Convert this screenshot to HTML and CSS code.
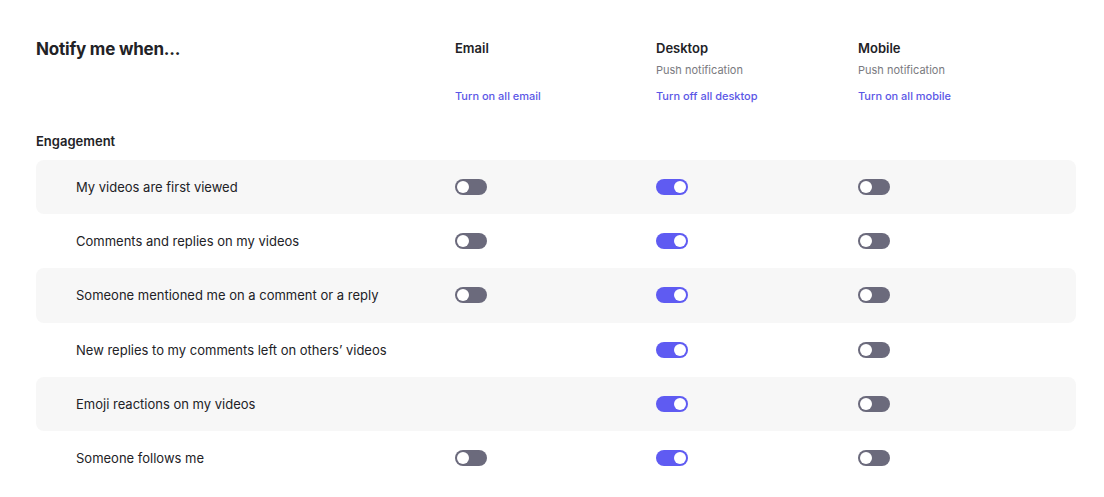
FILE: index.html
```html
<!DOCTYPE html>
<html lang="en">
<head>
    <meta charset="UTF-8">
    <meta name="viewport" content="width=device-width, initial-scale=1.0">
    <title>Notification settings</title>
    <link rel="stylesheet" href="styles.css">
</head>
<body>
    <div class="settings">
        <div class="settings-head">
            <h1>Notify me when...</h1>
            <div class="channel">
                <h3>Email</h3>
                <p class="sub">&nbsp;</p>
                <a href="#">Turn on all email</a>
            </div>
            <div class="channel">
                <h3>Desktop</h3>
                <p class="sub">Push notification</p>
                <a href="#">Turn off all desktop</a>
            </div>
            <div class="channel">
                <h3>Mobile</h3>
                <p class="sub">Push notification</p>
                <a href="#">Turn on all mobile</a>
            </div>
        </div>

        <h2>Engagement</h2>

        <div class="rows">
            <div class="row shaded">
                <span class="label">My videos are first viewed</span>
                <span><span class="toggle"></span></span>
                <span><span class="toggle on"></span></span>
                <span><span class="toggle"></span></span>
            </div>
            <div class="row">
                <span class="label">Comments and replies on my videos</span>
                <span><span class="toggle"></span></span>
                <span><span class="toggle on"></span></span>
                <span><span class="toggle"></span></span>
            </div>
            <div class="row shaded">
                <span class="label">Someone mentioned me on a comment or a reply</span>
                <span><span class="toggle"></span></span>
                <span><span class="toggle on"></span></span>
                <span><span class="toggle"></span></span>
            </div>
            <div class="row">
                <span class="label">New replies to my comments left on others’ videos</span>
                <span></span>
                <span><span class="toggle on"></span></span>
                <span><span class="toggle"></span></span>
            </div>
            <div class="row shaded">
                <span class="label">Emoji reactions on my videos</span>
                <span></span>
                <span><span class="toggle on"></span></span>
                <span><span class="toggle"></span></span>
            </div>
            <div class="row">
                <span class="label">Someone follows me</span>
                <span><span class="toggle"></span></span>
                <span><span class="toggle on"></span></span>
                <span><span class="toggle"></span></span>
            </div>
        </div>
    </div>
</body>
</html>
```

FILE: styles.css
```css
body {
    margin: 0;
    padding: 0;
    background-color: #fff;
    font-family: "Inter", "Lato", sans-serif;
    color: #222226;
}

.settings {
    padding: 38px 28px 0 36px;
}

.settings-head {
    display: grid;
    grid-template-columns: 419px 201px 202px 1fr;
}

.settings-head h1 {
    margin: 0;
    font-size: 17px;
    font-weight: 700;
    line-height: 22px;
    letter-spacing: -0.2px;
}

.channel h3 {
    margin: 0;
    font-size: 13px;
    font-weight: 600;
    line-height: 20px;
}

.channel .sub {
    margin: 4px 0 0;
    font-size: 11px;
    color: #7a7a80;
    line-height: 16px;
}

.channel a {
    display: block;
    margin-top: 10px;
    font-size: 11px;
    font-weight: 500;
    color: #5b57e6;
    text-decoration: none;
    line-height: 16px;
}

h2 {
    margin: 28px 0 10px;
    font-size: 13px;
    font-weight: 600;
    line-height: 18px;
}

.row {
    display: grid;
    grid-template-columns: 419px 201px 202px 1fr;
    align-items: center;
    height: 54.2px;
    border-radius: 8px;
}

.row.shaded {
    background-color: #f7f7f7;
}

.label {
    padding-left: 40px;
    font-size: 13px;
}

.toggle {
    display: block;
    position: relative;
    width: 32px;
    height: 16px;
    border-radius: 8px;
    background-color: #6b6a7c;
}

.toggle::after {
    content: "";
    position: absolute;
    top: 2px;
    left: 2px;
    width: 12px;
    height: 12px;
    border-radius: 50%;
    background-color: #fff;
}

.toggle.on {
    background-color: #5f5bf2;
}

.toggle.on::after {
    left: 18px;
}
```
